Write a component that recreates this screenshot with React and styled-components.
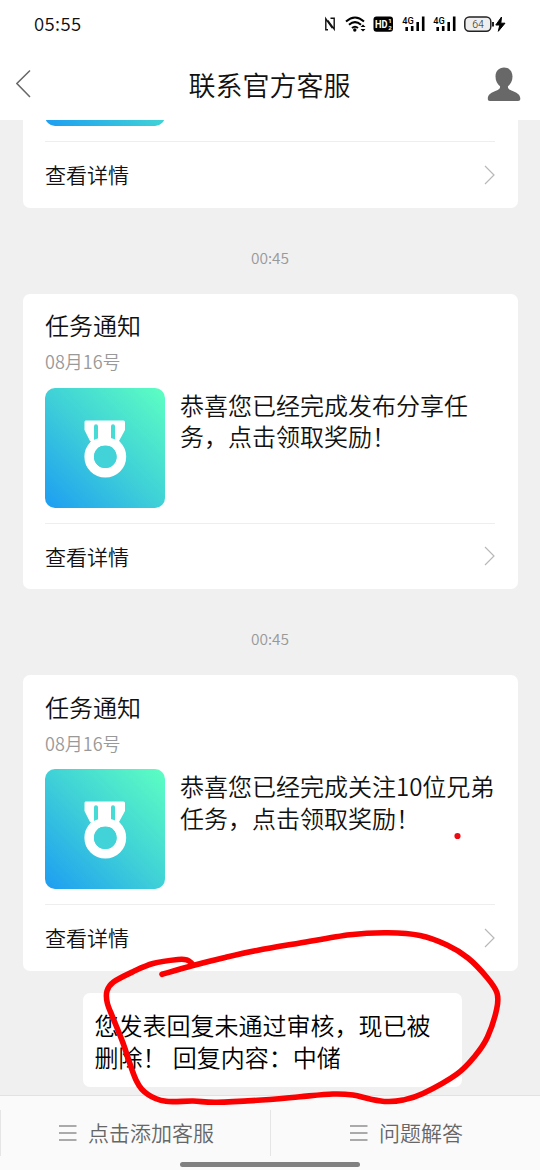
import styled, { createGlobalStyle } from "styled-components";


const GlobalStyle = createGlobalStyle`
    * { box-sizing: border-box; }
    body {
        margin: 0;
        font-family: "Noto Sans CJK SC", "Noto Sans", sans-serif;
        font-weight: 350;
        color: #111;
    }
`

const messages = [
    { id: 1, time: "00:45", title: "任务通知", date: "08月16号", text: "恭喜您已经完成发布分享任务，点击领取奖励！" },
    { id: 2, time: "00:45", title: "任务通知", date: "08月16号", text: "恭喜您已经完成关注10位兄弟任务，点击领取奖励！" },
]

const strokePoints = [
    [162, 974.3], [193, 965.5], [225, 957.5], [257, 950.5], [300, 943], [350, 934.7], [388, 932.8], [420, 935.5],
    [447, 945], [468, 958], [487, 977.5], [497, 993], [496.7, 1009], [487.5, 1037], [475, 1056], [457, 1074],
    [423, 1093.5], [403, 1100], [387, 1101.5], [370, 1099], [353, 1095], [333, 1094], [300, 1096.7], [270, 1099.5],
    [217, 1102.3], [193, 1101], [166, 1101.3], [148, 1094.5], [136, 1080], [123, 1043], [113, 1018], [107.3, 1003],
    [107, 991], [113.5, 982], [133, 971.7], [153, 963.5], [178, 959.5], [187, 960], [191.7, 963.3],
]

// smooth curve passing through every point
const toPath = (points) => {
    const at = (i) => points[Math.max(0, Math.min(points.length - 1, i))]
    let d = `M${points[0][0]} ${points[0][1]}`
    for (let i = 0; i < points.length - 1; i++) {
        const [a, b, c, e] = [at(i - 1), at(i), at(i + 1), at(i + 2)]
        d += `C${b[0] + (c[0] - a[0]) / 6} ${b[1] + (c[1] - a[1]) / 6} ${c[0] - (e[0] - b[0]) / 6} ${c[1] - (e[1] - b[1]) / 6} ${c[0]} ${c[1]}`
    }
    return d
}


export default function App() {
    return (
        <Screen>
            <GlobalStyle />
            <StatusBar>
                <Clock>05:55</Clock>
                <StatusIcons />
            </StatusBar>
            <NavBar>
                <BackIcon />
                <NavTitle>联系官方客服</NavTitle>
                <PersonIcon />
            </NavBar>
            <Chat>
                <Card>
                    <CardBody>
                        <Medal />
                    </CardBody>
                    <DetailLink />
                </Card>
                {messages.map((message) => (
                    <TaskMessage key={message.id} {...message} />
                ))}
                <Bubble>您发表回复未通过审核，现已被删除！ 回复内容：中储</Bubble>
            </Chat>
            <BottomMenu>
                <MenuItem label="点击添加客服" />
                <MenuItem label="问题解答" />
            </BottomMenu>
            <HomeIndicator />
            <Scribble viewBox="0 0 540 1170">
                <path d={toPath(strokePoints)} fill="none" stroke="#fb0000" strokeWidth="5.6" strokeLinecap="round" strokeLinejoin="round" />
                <circle cx="457.5" cy="836" r="3.1" fill="#ee0a12" />
            </Scribble>
        </Screen>
    )
}


const TaskMessage = ({ time, title, date, text }) => {
    return (
        <>
            <Time>{time}</Time>
            <Card>
                <CardTitle>{title}</CardTitle>
                <CardDate>{date}</CardDate>
                <CardBody>
                    <Medal />
                    <CardText>{text}</CardText>
                </CardBody>
                <DetailLink />
            </Card>
        </>
    )
}

const DetailLink = () => (
    <CardFooter>
        <span>查看详情</span>
        <svg width="12" height="20" viewBox="0 0 12 20" fill="none" stroke="#b8b8b8" strokeWidth="1.2">
            <path d="M2 1L11 10L2 19" />
        </svg>
    </CardFooter>
)

const Medal = () => (
    <Thumb>
        <svg width="120" height="120" viewBox="0 0 120 120">
            <path d="M40.5 32.5H78.5Q80 32.5 80 34V42L74 53H45L39.5 42V34Q39.5 32.5 40.5 32.5Z" fill="#fff" />
            <circle cx="60.3" cy="68.7" r="16.1" fill="none" stroke="#fff" strokeWidth="9.6" />
            <path d="M51 38.2V51.5M68 38.2V51.5" stroke="#46dbd4" strokeWidth="4" strokeLinecap="round" />
            <path d="M45 54Q60 44.5 75 54V58H45Z" fill="#fff" />
            <circle cx="60.3" cy="68.7" r="11.3" fill="#41d3d7" />
        </svg>
    </Thumb>
)

const MenuItem = ({ label }) => (
    <MenuButton>
        <svg width="18" height="18" viewBox="0 0 18 18" stroke="#aaa" strokeWidth="2">
            <path d="M0 2H17.5M0 9H17.5M0 16H17.5" />
        </svg>
        <span>{label}</span>
    </MenuButton>
)

const BackIcon = () => (
    <svg width="16" height="30" viewBox="0 0 16 30" fill="none" stroke="#686868" strokeWidth="1.5">
        <path d="M14 1.5L.9 14.5L14 28" />
    </svg>
)

const PersonIcon = () => (
    <svg width="34" height="36" viewBox="0 0 34 36" fill="#686868">
        <path d="M17 1.5C22 1.5 25.5 5 25.5 10.5C25.5 15 23.5 18.2 21 20.2C20.5 22.5 22 23.5 25 24.7C30 26.7 33.3 28.5 33.3 32.5C33.3 34.3 32.5 35 31 35H3C1.5 35 .8 34.3 .8 32.5C.8 28.5 4 26.7 9 24.7C12 23.5 13.5 22.5 13 20.2C10.5 18.2 8.5 15 8.5 10.5C8.5 5 12 1.5 17 1.5Z" />
    </svg>
)

const Signal = ({ x }) => (
    <g transform={`translate(${x} 0)`}>
        <text x="-.3" y="12" fontSize="9.5" fontWeight="500" textLength="11.5" lengthAdjust="spacingAndGlyphs">4G</text>
        <path d="M4.2 15V19M9.7 14V19M15.2 10V19M20.7 4.5V19" stroke="#000" strokeWidth="2.6" />
    </g>
)

const StatusIcons = () => (
    <svg width="184" height="24" viewBox="0 0 184 24" fontFamily="Roboto, sans-serif">
        <path d="M6 17.8H3.8V6.8L10.3 16.2M8.5 6.2H12.2V17.2L5.8 8.5" fill="none" stroke="#111" strokeWidth="1.4" />
        <g fill="none" stroke="#000" strokeWidth="2">
            <path d="M24 9.5Q33 1.5 42 9.5M27 12.8Q33 7.5 39 12.8M30 16Q33 13.5 36 16" />
        </g>
        <circle cx="32.8" cy="18" r="1.7" />
        <path d="M38.5 15L41 12.5L43.5 15ZM38.5 17L41 19.5L43.5 17Z" />
        <rect x="51.5" y="4.5" width="19.5" height="15.2" rx="3" />
        <text x="53" y="16" fontSize="11" fontWeight="700" fill="#fff" textLength="12.5" lengthAdjust="spacingAndGlyphs">HD</text>
        <text x="66.3" y="11.3" fontSize="6" fontWeight="700" fill="#fff">1</text>
        <text x="66.3" y="18" fontSize="6" fontWeight="700" fill="#fff">2</text>
        <Signal x={80.5} />
        <Signal x={111.5} />
        <rect x="142.8" y="5" width="26" height="14.2" rx="4.5" fill="#eee" stroke="#222" strokeWidth="1.5" />
        <path d="M171 10V14.5" stroke="#222" strokeWidth="2" />
        <text x="156" y="15.8" fontSize="10.5" textAnchor="middle" fill="#222">64</text>
        <path d="M179.5 5L173.8 13H177.8L176.3 19.3L183 11.2H178.8Z" stroke="#000" strokeWidth="1" strokeLinejoin="round" />
    </svg>
)


const Screen = styled.div`
    position: relative;
    width: 540px;
    height: 1170px;
    display: flex;
    flex-direction: column;
    overflow: hidden;
    background: #f0f0f0;
`

const StatusBar = styled.div`
    height: 48px;
    flex: none;
    display: flex;
    align-items: center;
    justify-content: space-between;
    padding: 0 34px;
    background: #fff;
`

const Clock = styled.span`
    margin-top: -2px;
    font-size: 18.5px;
    letter-spacing: 0.4px;
`

const NavBar = styled.header`
    height: 72px;
    flex: none;
    display: flex;
    align-items: center;
    justify-content: space-between;
    padding: 0 19px 0 16px;
    background: #fff;
`

const NavTitle = styled.h1`
    margin: 1px 0 0 20px;
    font-size: 27px;
    font-weight: 350;
    line-height: 40px;
`

const Chat = styled.main`
    flex: 1;
    min-height: 0;
    display: flex;
    flex-direction: column;
    justify-content: flex-end;
    overflow: hidden;
    padding: 0 22.5px 8px;
`

const Time = styled.time`
    flex: none;
    height: 86px;
    padding-top: 38px;
    font-size: 15.5px;
    line-height: 22px;
    text-align: center;
    color: #999;
`

const Card = styled.section`
    flex: none;
    padding: 0 22.5px;
    border-radius: 7px;
    background: #fff;
`

const CardTitle = styled.h2`
    margin: 0;
    padding-top: 13.5px;
    font-size: 24px;
    font-weight: 350;
    line-height: 36px;
`

const CardDate = styled.p`
    margin: 0;
    height: 44.5px;
    padding-top: 5px;
    font-size: 18px;
    line-height: 26px;
    color: #999;
`

const CardBody = styled.div`
    display: flex;
    gap: 15px;
    padding-bottom: 15px;
`

const Thumb = styled.div`
    flex: none;
    width: 120px;
    height: 120px;
    border-radius: 10px;
    overflow: hidden;
    background: linear-gradient(45deg, #1d9df2 0%, #3fd1d7 50%, #5dffc2 100%);
`

const CardText = styled.p`
    flex: 1;
    margin: 0 -4px 0 0;
    padding-top: 1px;
    font-size: 24px;
    line-height: 31.5px;
    word-break: break-all;
`

const CardFooter = styled.div`
    height: 66.5px;
    display: flex;
    align-items: center;
    justify-content: space-between;
    border-top: 1px solid #eee;
    font-size: 21px;

    span {
        margin-top: -1px;
    }
`

const Bubble = styled.div`
    flex: none;
    align-self: flex-start;
    width: 379px;
    height: 94px;
    margin: 22.5px 0 0 60px;
    padding: 16px 20px 0 12px;
    border-radius: 7px;
    background: #fff;
    color: #000;
    font-size: 24px;
    line-height: 31.5px;
    word-spacing: 1px;
`

const BottomMenu = styled.nav`
    flex: none;
    height: 75px;
    display: flex;
    padding-top: 14px;
    border-top: 1px solid #e2e2e2;
    background: #fafafa;
`

const MenuButton = styled.div`
    flex: 1;
    height: 46px;
    display: flex;
    align-items: center;
    justify-content: center;
    gap: 11px;
    padding-left: 2px;
    border-left: 1px solid #e5e5e5;
    font-size: 21px;
    color: #666;

    span {
        margin-top: -2px;
    }
`

const HomeIndicator = styled.div`
    position: absolute;
    left: 180px;
    bottom: 3px;
    width: 180px;
    height: 5px;
    border-radius: 3px;
    background: #808080;
`

const Scribble = styled.svg`
    position: absolute;
    inset: 0;
    width: 540px;
    height: 1170px;
    pointer-events: none;
`
